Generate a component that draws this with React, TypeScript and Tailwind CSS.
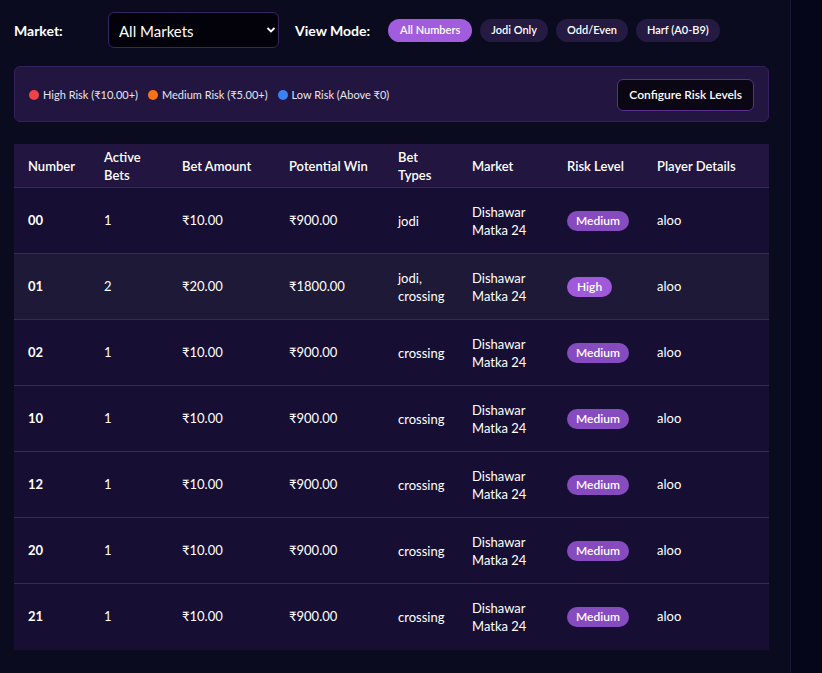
import React, { useState } from "react";

type Risk = "High" | "Medium";

interface BetRow {
  number: string;
  activeBets: number;
  betAmount: string;
  potentialWin: string;
  betTypes: string[];
  market: string;
  risk: Risk;
  player: string;
}

const rows: BetRow[] = [
  { number: "00", activeBets: 1, betAmount: "₹10.00", potentialWin: "₹900.00", betTypes: ["jodi"], market: "Dishawar Matka 24", risk: "Medium", player: "aloo" },
  { number: "01", activeBets: 2, betAmount: "₹20.00", potentialWin: "₹1800.00", betTypes: ["jodi", "crossing"], market: "Dishawar Matka 24", risk: "High", player: "aloo" },
  { number: "02", activeBets: 1, betAmount: "₹10.00", potentialWin: "₹900.00", betTypes: ["crossing"], market: "Dishawar Matka 24", risk: "Medium", player: "aloo" },
  { number: "10", activeBets: 1, betAmount: "₹10.00", potentialWin: "₹900.00", betTypes: ["crossing"], market: "Dishawar Matka 24", risk: "Medium", player: "aloo" },
  { number: "12", activeBets: 1, betAmount: "₹10.00", potentialWin: "₹900.00", betTypes: ["crossing"], market: "Dishawar Matka 24", risk: "Medium", player: "aloo" },
  { number: "20", activeBets: 1, betAmount: "₹10.00", potentialWin: "₹900.00", betTypes: ["crossing"], market: "Dishawar Matka 24", risk: "Medium", player: "aloo" },
  { number: "21", activeBets: 1, betAmount: "₹10.00", potentialWin: "₹900.00", betTypes: ["crossing"], market: "Dishawar Matka 24", risk: "Medium", player: "aloo" },
];

const viewModes = ["All Numbers", "Jodi Only", "Odd/Even", "Harf (A0-B9)"];

const RiskBadge: React.FC<{ risk: Risk }> = ({ risk }) => {
  if (risk === "High") {
    return (
      <span className="inline-block rounded-full bg-[#a05ad9] px-[10px] py-[2px] text-[12px] font-semibold leading-4 text-white">
        High
      </span>
    );
  }
  return (
    <span className="inline-block rounded-full bg-[#874bc0] px-[9px] py-[2px] text-[12px] font-semibold leading-4 text-white">
      Medium
    </span>
  );
};

export default function App() {
  const [mode, setMode] = useState<string>("All Numbers");
  const [hovered, setHovered] = useState<string>("01");

  return (
    <div className="flex min-h-[673px] w-full bg-[#05061a] font-['Lato','Noto_Sans',sans-serif] text-white">
      <div className="w-[791px] shrink-0 border-r border-[#1d1a38] bg-[#0b0b1f] pl-[14px] pr-[21px] pt-[12px] pb-[24px]">
        {/* Top controls */}
        <div className="flex items-center">
          <label className="w-[94px] text-[14px] font-bold">Market:</label>
          <div className="relative">
            <select className="h-[36px] w-[171px] appearance-none rounded-md border border-[#3a2462] bg-[#03020b] pl-[10px] pr-8 pt-[2px] text-[15px] text-white outline-none">
              <option>All Markets</option>
              <option>Dishawar Matka 24</option>
            </select>
            <svg
              className="pointer-events-none absolute right-[3px] top-[14px]"
              width="10"
              height="8"
              viewBox="0 0 10 8"
              fill="none"
            >
              <path d="M1.5 2 L5 5.5 L8.5 2" stroke="white" strokeWidth="1.8" />
            </svg>
          </div>
          <span className="ml-[16px] text-[14px] font-bold">View Mode:</span>
          <div className="ml-[18px] flex gap-[8px]">
            {viewModes.map((m) => (
              <button
                key={m}
                onClick={() => setMode(m)}
                className={
                  mode === m
                    ? "h-[23px] rounded-full bg-[#a25ddf] px-[12px] text-[11px] font-semibold text-white"
                    : "h-[23px] rounded-full bg-[#241a42] px-[11px] text-[11px] font-semibold text-white"
                }
              >
                {m}
              </button>
            ))}
          </div>
        </div>

        {/* Risk legend */}
        <div className="mt-[18px] flex h-[56px] items-center justify-between rounded-md border border-[#33205c] bg-[#221640] pl-[14px] pr-[14px]">
          <div className="flex items-center gap-[10px] pt-[2px] text-[11px] text-[#e8e4f0]">
            <div className="flex items-center gap-[4px]">
              <span className="h-[10px] w-[10px] rounded-full bg-[#ef4444]" />
              High Risk (₹10.00+)
            </div>
            <div className="flex items-center gap-[4px]">
              <span className="h-[10px] w-[10px] rounded-full bg-[#f97316]" />
              Medium Risk (₹5.00+)
            </div>
            <div className="flex items-center gap-[4px]">
              <span className="h-[10px] w-[10px] rounded-full bg-[#3b82f6]" />
              Low Risk (Above ₹0)
            </div>
          </div>
          <button className="mt-[2px] h-[32px] rounded-md border border-[#5a2e8e] bg-[#0b0614] px-[11px] text-[12px] font-semibold text-white">
            Configure Risk Levels
          </button>
        </div>

        {/* Table */}
        <table className="mt-[22px] w-full table-fixed border-collapse text-[13px]">
          <colgroup>
            <col className="w-[76px]" />
            <col className="w-[78px]" />
            <col className="w-[107px]" />
            <col className="w-[109px]" />
            <col className="w-[74px]" />
            <col className="w-[95px]" />
            <col className="w-[90px]" />
            <col />
          </colgroup>
          <thead>
            <tr className="border-b border-[#3a2660] bg-[#221640] text-left">
              <th className="py-[3.5px] pl-[14px] pr-[14px] font-semibold leading-[18px]">Number</th>
              <th className="py-[3.5px] pl-[14px] pr-[14px] font-semibold leading-[18px]">Active Bets</th>
              <th className="py-[3.5px] pl-[14px] pr-[10px] font-semibold leading-[18px]">Bet Amount</th>
              <th className="py-[3.5px] pl-[14px] pr-[10px] font-semibold leading-[18px]">Potential Win</th>
              <th className="py-[3.5px] pl-[14px] pr-[14px] font-semibold leading-[18px]">Bet Types</th>
              <th className="py-[3.5px] pl-[14px] pr-[14px] font-semibold leading-[18px]">Market</th>
              <th className="py-[3.5px] pl-[14px] pr-[6px] font-semibold leading-[18px]">Risk Level</th>
              <th className="py-[3.5px] pl-[14px] pr-[14px] font-semibold leading-[18px]">Player Details</th>
            </tr>
          </thead>
          <tbody>
            {rows.map((r, i) => (
              <tr
                key={r.number}
                onMouseEnter={() => setHovered(r.number)}
                className={
                  (i < rows.length - 1 ? "border-b border-[#3a2660] " : "") +
                  (hovered === r.number ? "bg-[#1d1937]" : "bg-[#170f33]")
                }
              >
                <td className="h-[66px] pl-[14px] font-bold">{r.number}</td>
                <td className="pl-[14px]">{r.activeBets}</td>
                <td className="pl-[14px]">{r.betAmount}</td>
                <td className="pl-[14px]">{r.potentialWin}</td>
                <td className="pl-[14px] leading-[18px]">{r.betTypes.join(", ")}</td>
                <td className="pl-[14px] leading-[18px]">{r.market}</td>
                <td className="pl-[14px]">
                  <RiskBadge risk={r.risk} />
                </td>
                <td className="pl-[14px]">{r.player}</td>
              </tr>
            ))}
          </tbody>
        </table>
      </div>
    </div>
  );
}
